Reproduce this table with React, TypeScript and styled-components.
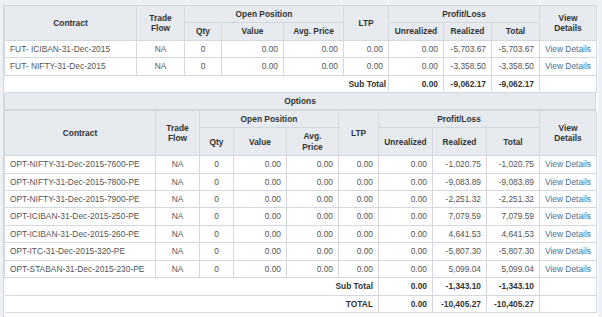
import React from 'react';
import styled, { createGlobalStyle } from 'styled-components';

const GlobalStyle = createGlobalStyle`
  html, body {
    margin: 0;
    padding: 0;
    background: #edf0f4;
    font-family: "Liberation Sans", Arial, sans-serif;
  }
`;

const Page = styled.div`
  padding-top: 5px;
  width: 602px;
  height: 317px;
  overflow: hidden;
  box-sizing: border-box;
`;

const Panel = styled.div`
  margin-left: 3px;
  width: 595px;
  min-height: 312px;
  background: #ffffff;
  border-left: 1px solid #d3d8de;
  box-sizing: border-box;
`;

const Table = styled.table`
  width: 592px;
  table-layout: fixed;
  border-collapse: collapse;
  font-size: 8.4px;
  line-height: 10.4px;
  color: #555;
`;

const HeadCell = styled.th`
  background: #e7ebf0;
  border: 1px solid #d3d8de;
  padding: 3px 4px;
  font-weight: bold;
  color: #333;
  text-align: center;
  vertical-align: middle;
`;

const Cell = styled.td<{ $align?: 'left' | 'center' | 'right' }>`
  border: 1px solid #d3d8de;
  padding: 3px 5px;
  text-align: ${p => p.$align || 'right'};
  white-space: nowrap;
  vertical-align: middle;
`;

const BlankCell = styled.td`
  border-top: 1px solid #d3d8de;
  border-bottom: 1px solid #d3d8de;
  border-left: none;
  border-right: none;
  padding: 3px 5px;
`;

const TotalCell = styled.td<{ $plain?: boolean }>`
  border: 1px solid #d3d8de;
  border-left: ${p => (p.$plain ? 'none' : '1px solid #d3d8de')};
  padding: 3px 5px;
  text-align: right;
  font-weight: bold;
  color: #333;
  white-space: nowrap;
`;

const Link = styled.a`
  color: #46709b;
  text-decoration: none;
  cursor: pointer;
`;

const SectionTitle = styled.div`
  width: 592px;
  box-sizing: border-box;
  background: #e7ebf0;
  border: 1px solid #d3d8de;
  border-top: none;
  height: 17px;
  line-height: 16px;
  text-align: center;
  font-size: 8.4px;
  font-weight: bold;
  color: #333;
`;

type Row = { contract: string; realized: string };

const futures: Row[] = [
  { contract: 'FUT- ICIBAN-31-Dec-2015', realized: '-5,703.67' },
  { contract: 'FUT- NIFTY-31-Dec-2015', realized: '-3,358.50' },
];

const options: Row[] = [
  { contract: 'OPT-NIFTY-31-Dec-2015-7600-PE', realized: '-1,020.75' },
  { contract: 'OPT-NIFTY-31-Dec-2015-7800-PE', realized: '-9,083.89' },
  { contract: 'OPT-NIFTY-31-Dec-2015-7900-PE', realized: '-2,251.32' },
  { contract: 'OPT-ICIBAN-31-Dec-2015-250-PE', realized: '7,079.59' },
  { contract: 'OPT-ICIBAN-31-Dec-2015-260-PE', realized: '4,641.53' },
  { contract: 'OPT-ITC-31-Dec-2015-320-PE', realized: '-5,807.30' },
  { contract: 'OPT-STABAN-31-Dec-2015-230-PE', realized: '5,099.04' },
];

const futuresCols = [132, 48, 37, 62, 60, 45, 55, 48, 48, 57];
const optionsCols = [151, 44, 34, 53, 52, 40, 54, 54, 53, 57];

const Header: React.FC<{ narrow?: boolean }> = ({ narrow }) => (
  <thead>
    <tr>
      <HeadCell rowSpan={2}>Contract</HeadCell>
      <HeadCell rowSpan={2}>Trade<br />Flow</HeadCell>
      <HeadCell colSpan={3}>Open Position</HeadCell>
      <HeadCell rowSpan={2}>LTP</HeadCell>
      <HeadCell colSpan={3}>Profit/Loss</HeadCell>
      <HeadCell rowSpan={2}>View<br />Details</HeadCell>
    </tr>
    <tr>
      <HeadCell>Qty</HeadCell>
      <HeadCell>Value</HeadCell>
      <HeadCell>{narrow ? <>Avg.<br />Price</> : 'Avg. Price'}</HeadCell>
      <HeadCell>Unrealized</HeadCell>
      <HeadCell>Realized</HeadCell>
      <HeadCell>Total</HeadCell>
    </tr>
  </thead>
);

const DataRow: React.FC<{ row: Row }> = ({ row }) => (
  <tr>
    <Cell $align="left">{row.contract}</Cell>
    <Cell $align="center">NA</Cell>
    <Cell $align="center">0</Cell>
    <Cell>0.00</Cell>
    <Cell>0.00</Cell>
    <Cell>0.00</Cell>
    <Cell>0.00</Cell>
    <Cell>{row.realized}</Cell>
    <Cell>{row.realized}</Cell>
    <Cell $align="left">
      <Link>View Details</Link>
    </Cell>
  </tr>
);

const TotalRow: React.FC<{ label: string; value: string; labelSpan: number }> = ({
  label,
  value,
  labelSpan,
}) => (
  <tr>
    {labelSpan === 1 && <BlankCell colSpan={5} />}
    <TotalCell $plain colSpan={labelSpan}>{label}</TotalCell>
    <TotalCell>0.00</TotalCell>
    <TotalCell>{value}</TotalCell>
    <TotalCell>{value}</TotalCell>
    <TotalCell />
  </tr>
);

const Cols: React.FC<{ widths: number[] }> = ({ widths }) => (
  <colgroup>
    {widths.map((w, i) => (
      <col key={i} style={{ width: w }} />
    ))}
  </colgroup>
);

export default function App() {
  return (
    <>
      <GlobalStyle />
      <Page>
        <Panel>
          <Table>
            <Cols widths={futuresCols} />
            <Header />
            <tbody>
              {futures.map(r => (
                <DataRow key={r.contract} row={r} />
              ))}
              <TotalRow label="Sub Total" value="-9,062.17" labelSpan={1} />
            </tbody>
          </Table>
          <SectionTitle>Options</SectionTitle>
          <Table>
            <Cols widths={optionsCols} />
            <Header narrow />
            <tbody>
              {options.map(r => (
                <DataRow key={r.contract} row={r} />
              ))}
              <TotalRow label="Sub Total" value="-1,343.10" labelSpan={6} />
              <TotalRow label="TOTAL" value="-10,405.27" labelSpan={6} />
            </tbody>
          </Table>
        </Panel>
      </Page>
    </>
  );
}
